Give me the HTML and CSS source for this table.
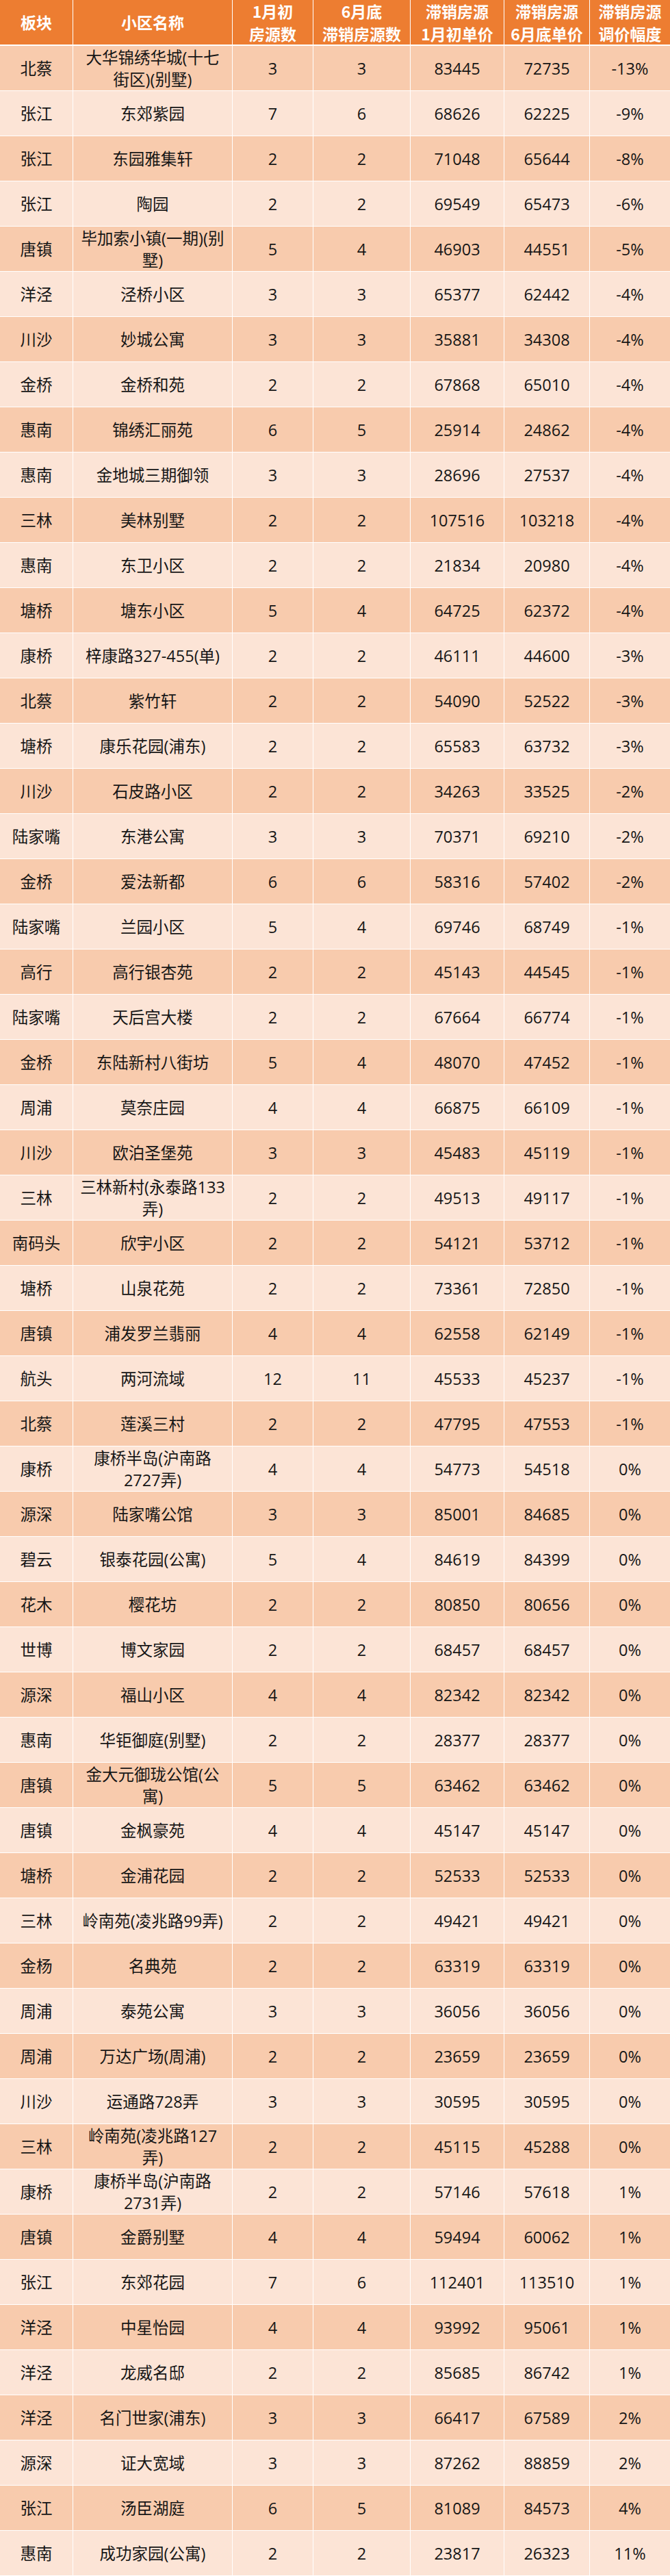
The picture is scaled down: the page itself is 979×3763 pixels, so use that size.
FILE: index.html
```html
<!DOCTYPE html>
<html lang="zh-CN">
<head>
<meta charset="utf-8">
<title>滞销房源调价幅度</title>
<link rel="stylesheet" href="styles.css">
</head>
<body>
<div class="sheet">
  <div class="row head">
    <div class="cell">板块</div>
    <div class="cell">小区名称</div>
    <div class="cell">1月初<br>房源数</div>
    <div class="cell">6月底<br>滞销房源数</div>
    <div class="cell">滞销房源<br>1月初单价</div>
    <div class="cell">滞销房源<br>6月底单价</div>
    <div class="cell">滞销房源<br>调价幅度</div>
  </div>
  <div class="body">
    <div class="row"><div class="cell">北蔡</div><div class="cell">大华锦绣华城(十七<br>街区)(别墅)</div><div class="cell">3</div><div class="cell">3</div><div class="cell">83445</div><div class="cell">72735</div><div class="cell">-13%</div></div>
    <div class="row"><div class="cell">张江</div><div class="cell">东郊紫园</div><div class="cell">7</div><div class="cell">6</div><div class="cell">68626</div><div class="cell">62225</div><div class="cell">-9%</div></div>
    <div class="row"><div class="cell">张江</div><div class="cell">东园雅集轩</div><div class="cell">2</div><div class="cell">2</div><div class="cell">71048</div><div class="cell">65644</div><div class="cell">-8%</div></div>
    <div class="row"><div class="cell">张江</div><div class="cell">陶园</div><div class="cell">2</div><div class="cell">2</div><div class="cell">69549</div><div class="cell">65473</div><div class="cell">-6%</div></div>
    <div class="row"><div class="cell">唐镇</div><div class="cell">毕加索小镇(一期)(别<br>墅)</div><div class="cell">5</div><div class="cell">4</div><div class="cell">46903</div><div class="cell">44551</div><div class="cell">-5%</div></div>
    <div class="row"><div class="cell">洋泾</div><div class="cell">泾桥小区</div><div class="cell">3</div><div class="cell">3</div><div class="cell">65377</div><div class="cell">62442</div><div class="cell">-4%</div></div>
    <div class="row"><div class="cell">川沙</div><div class="cell">妙城公寓</div><div class="cell">3</div><div class="cell">3</div><div class="cell">35881</div><div class="cell">34308</div><div class="cell">-4%</div></div>
    <div class="row"><div class="cell">金桥</div><div class="cell">金桥和苑</div><div class="cell">2</div><div class="cell">2</div><div class="cell">67868</div><div class="cell">65010</div><div class="cell">-4%</div></div>
    <div class="row"><div class="cell">惠南</div><div class="cell">锦绣汇丽苑</div><div class="cell">6</div><div class="cell">5</div><div class="cell">25914</div><div class="cell">24862</div><div class="cell">-4%</div></div>
    <div class="row"><div class="cell">惠南</div><div class="cell">金地城三期御领</div><div class="cell">3</div><div class="cell">3</div><div class="cell">28696</div><div class="cell">27537</div><div class="cell">-4%</div></div>
    <div class="row"><div class="cell">三林</div><div class="cell">美林别墅</div><div class="cell">2</div><div class="cell">2</div><div class="cell">107516</div><div class="cell">103218</div><div class="cell">-4%</div></div>
    <div class="row"><div class="cell">惠南</div><div class="cell">东卫小区</div><div class="cell">2</div><div class="cell">2</div><div class="cell">21834</div><div class="cell">20980</div><div class="cell">-4%</div></div>
    <div class="row"><div class="cell">塘桥</div><div class="cell">塘东小区</div><div class="cell">5</div><div class="cell">4</div><div class="cell">64725</div><div class="cell">62372</div><div class="cell">-4%</div></div>
    <div class="row"><div class="cell">康桥</div><div class="cell">梓康路327-455(单)</div><div class="cell">2</div><div class="cell">2</div><div class="cell">46111</div><div class="cell">44600</div><div class="cell">-3%</div></div>
    <div class="row"><div class="cell">北蔡</div><div class="cell">紫竹轩</div><div class="cell">2</div><div class="cell">2</div><div class="cell">54090</div><div class="cell">52522</div><div class="cell">-3%</div></div>
    <div class="row"><div class="cell">塘桥</div><div class="cell">康乐花园(浦东)</div><div class="cell">2</div><div class="cell">2</div><div class="cell">65583</div><div class="cell">63732</div><div class="cell">-3%</div></div>
    <div class="row"><div class="cell">川沙</div><div class="cell">石皮路小区</div><div class="cell">2</div><div class="cell">2</div><div class="cell">34263</div><div class="cell">33525</div><div class="cell">-2%</div></div>
    <div class="row"><div class="cell">陆家嘴</div><div class="cell">东港公寓</div><div class="cell">3</div><div class="cell">3</div><div class="cell">70371</div><div class="cell">69210</div><div class="cell">-2%</div></div>
    <div class="row"><div class="cell">金桥</div><div class="cell">爱法新都</div><div class="cell">6</div><div class="cell">6</div><div class="cell">58316</div><div class="cell">57402</div><div class="cell">-2%</div></div>
    <div class="row"><div class="cell">陆家嘴</div><div class="cell">兰园小区</div><div class="cell">5</div><div class="cell">4</div><div class="cell">69746</div><div class="cell">68749</div><div class="cell">-1%</div></div>
    <div class="row"><div class="cell">高行</div><div class="cell">高行银杏苑</div><div class="cell">2</div><div class="cell">2</div><div class="cell">45143</div><div class="cell">44545</div><div class="cell">-1%</div></div>
    <div class="row"><div class="cell">陆家嘴</div><div class="cell">天后宫大楼</div><div class="cell">2</div><div class="cell">2</div><div class="cell">67664</div><div class="cell">66774</div><div class="cell">-1%</div></div>
    <div class="row"><div class="cell">金桥</div><div class="cell">东陆新村八街坊</div><div class="cell">5</div><div class="cell">4</div><div class="cell">48070</div><div class="cell">47452</div><div class="cell">-1%</div></div>
    <div class="row"><div class="cell">周浦</div><div class="cell">莫奈庄园</div><div class="cell">4</div><div class="cell">4</div><div class="cell">66875</div><div class="cell">66109</div><div class="cell">-1%</div></div>
    <div class="row"><div class="cell">川沙</div><div class="cell">欧泊圣堡苑</div><div class="cell">3</div><div class="cell">3</div><div class="cell">45483</div><div class="cell">45119</div><div class="cell">-1%</div></div>
    <div class="row"><div class="cell">三林</div><div class="cell">三林新村(永泰路133<br>弄)</div><div class="cell">2</div><div class="cell">2</div><div class="cell">49513</div><div class="cell">49117</div><div class="cell">-1%</div></div>
    <div class="row"><div class="cell">南码头</div><div class="cell">欣宇小区</div><div class="cell">2</div><div class="cell">2</div><div class="cell">54121</div><div class="cell">53712</div><div class="cell">-1%</div></div>
    <div class="row"><div class="cell">塘桥</div><div class="cell">山泉花苑</div><div class="cell">2</div><div class="cell">2</div><div class="cell">73361</div><div class="cell">72850</div><div class="cell">-1%</div></div>
    <div class="row"><div class="cell">唐镇</div><div class="cell">浦发罗兰翡丽</div><div class="cell">4</div><div class="cell">4</div><div class="cell">62558</div><div class="cell">62149</div><div class="cell">-1%</div></div>
    <div class="row"><div class="cell">航头</div><div class="cell">两河流域</div><div class="cell">12</div><div class="cell">11</div><div class="cell">45533</div><div class="cell">45237</div><div class="cell">-1%</div></div>
    <div class="row"><div class="cell">北蔡</div><div class="cell">莲溪三村</div><div class="cell">2</div><div class="cell">2</div><div class="cell">47795</div><div class="cell">47553</div><div class="cell">-1%</div></div>
    <div class="row"><div class="cell">康桥</div><div class="cell">康桥半岛(沪南路<br>2727弄)</div><div class="cell">4</div><div class="cell">4</div><div class="cell">54773</div><div class="cell">54518</div><div class="cell">0%</div></div>
    <div class="row"><div class="cell">源深</div><div class="cell">陆家嘴公馆</div><div class="cell">3</div><div class="cell">3</div><div class="cell">85001</div><div class="cell">84685</div><div class="cell">0%</div></div>
    <div class="row"><div class="cell">碧云</div><div class="cell">银泰花园(公寓)</div><div class="cell">5</div><div class="cell">4</div><div class="cell">84619</div><div class="cell">84399</div><div class="cell">0%</div></div>
    <div class="row"><div class="cell">花木</div><div class="cell">樱花坊</div><div class="cell">2</div><div class="cell">2</div><div class="cell">80850</div><div class="cell">80656</div><div class="cell">0%</div></div>
    <div class="row"><div class="cell">世博</div><div class="cell">博文家园</div><div class="cell">2</div><div class="cell">2</div><div class="cell">68457</div><div class="cell">68457</div><div class="cell">0%</div></div>
    <div class="row"><div class="cell">源深</div><div class="cell">福山小区</div><div class="cell">4</div><div class="cell">4</div><div class="cell">82342</div><div class="cell">82342</div><div class="cell">0%</div></div>
    <div class="row"><div class="cell">惠南</div><div class="cell">华钜御庭(别墅)</div><div class="cell">2</div><div class="cell">2</div><div class="cell">28377</div><div class="cell">28377</div><div class="cell">0%</div></div>
    <div class="row"><div class="cell">唐镇</div><div class="cell">金大元御珑公馆(公<br>寓)</div><div class="cell">5</div><div class="cell">5</div><div class="cell">63462</div><div class="cell">63462</div><div class="cell">0%</div></div>
    <div class="row"><div class="cell">唐镇</div><div class="cell">金枫豪苑</div><div class="cell">4</div><div class="cell">4</div><div class="cell">45147</div><div class="cell">45147</div><div class="cell">0%</div></div>
    <div class="row"><div class="cell">塘桥</div><div class="cell">金浦花园</div><div class="cell">2</div><div class="cell">2</div><div class="cell">52533</div><div class="cell">52533</div><div class="cell">0%</div></div>
    <div class="row"><div class="cell">三林</div><div class="cell">岭南苑(凌兆路99弄)</div><div class="cell">2</div><div class="cell">2</div><div class="cell">49421</div><div class="cell">49421</div><div class="cell">0%</div></div>
    <div class="row"><div class="cell">金杨</div><div class="cell">名典苑</div><div class="cell">2</div><div class="cell">2</div><div class="cell">63319</div><div class="cell">63319</div><div class="cell">0%</div></div>
    <div class="row"><div class="cell">周浦</div><div class="cell">泰苑公寓</div><div class="cell">3</div><div class="cell">3</div><div class="cell">36056</div><div class="cell">36056</div><div class="cell">0%</div></div>
    <div class="row"><div class="cell">周浦</div><div class="cell">万达广场(周浦)</div><div class="cell">2</div><div class="cell">2</div><div class="cell">23659</div><div class="cell">23659</div><div class="cell">0%</div></div>
    <div class="row"><div class="cell">川沙</div><div class="cell">运通路728弄</div><div class="cell">3</div><div class="cell">3</div><div class="cell">30595</div><div class="cell">30595</div><div class="cell">0%</div></div>
    <div class="row"><div class="cell">三林</div><div class="cell">岭南苑(凌兆路127<br>弄)</div><div class="cell">2</div><div class="cell">2</div><div class="cell">45115</div><div class="cell">45288</div><div class="cell">0%</div></div>
    <div class="row"><div class="cell">康桥</div><div class="cell">康桥半岛(沪南路<br>2731弄)</div><div class="cell">2</div><div class="cell">2</div><div class="cell">57146</div><div class="cell">57618</div><div class="cell">1%</div></div>
    <div class="row"><div class="cell">唐镇</div><div class="cell">金爵别墅</div><div class="cell">4</div><div class="cell">4</div><div class="cell">59494</div><div class="cell">60062</div><div class="cell">1%</div></div>
    <div class="row"><div class="cell">张江</div><div class="cell">东郊花园</div><div class="cell">7</div><div class="cell">6</div><div class="cell">112401</div><div class="cell">113510</div><div class="cell">1%</div></div>
    <div class="row"><div class="cell">洋泾</div><div class="cell">中星怡园</div><div class="cell">4</div><div class="cell">4</div><div class="cell">93992</div><div class="cell">95061</div><div class="cell">1%</div></div>
    <div class="row"><div class="cell">洋泾</div><div class="cell">龙威名邸</div><div class="cell">2</div><div class="cell">2</div><div class="cell">85685</div><div class="cell">86742</div><div class="cell">1%</div></div>
    <div class="row"><div class="cell">洋泾</div><div class="cell">名门世家(浦东)</div><div class="cell">3</div><div class="cell">3</div><div class="cell">66417</div><div class="cell">67589</div><div class="cell">2%</div></div>
    <div class="row"><div class="cell">源深</div><div class="cell">证大宽域</div><div class="cell">3</div><div class="cell">3</div><div class="cell">87262</div><div class="cell">88859</div><div class="cell">2%</div></div>
    <div class="row"><div class="cell">张江</div><div class="cell">汤臣湖庭</div><div class="cell">6</div><div class="cell">5</div><div class="cell">81089</div><div class="cell">84573</div><div class="cell">4%</div></div>
    <div class="row"><div class="cell">惠南</div><div class="cell">成功家园(公寓)</div><div class="cell">2</div><div class="cell">2</div><div class="cell">23817</div><div class="cell">26323</div><div class="cell">11%</div></div>
  </div>
</div>
</body>
</html>
```
FILE: styles.css
```css
html, body {
  margin: 0;
  padding: 0;
  background: #ffffff;
}

.sheet {
  width: 979px;
  display: flex;
  flex-direction: column;
  gap: 2px;
  font-family: "Open Sans", "Noto Sans CJK SC", sans-serif;
  font-size: 23.5px;
  color: #161616;
}

.body {
  display: flex;
  flex-direction: column;
  gap: 1px;
}

.row {
  display: grid;
  grid-template-columns: 106px 232px 117px 141px 136px 124px 117px;
  column-gap: 1px;
  height: 65px;
}

.cell {
  display: flex;
  align-items: center;
  justify-content: center;
  text-align: center;
  white-space: nowrap;
  line-height: 32px;
  padding: 0 2px;
  overflow: hidden;
}

.head .cell {
  background: #ed7d31;
  color: #ffffff;
  font-weight: 700;
  font-family: "Noto Sans CJK SC", sans-serif;
  font-size: 23px;
  line-height: 33px;
}

.body .row:nth-child(odd) .cell {
  background: #f8cbad;
}

.body .row:nth-child(even) .cell {
  background: #fce4d6;
}
```
